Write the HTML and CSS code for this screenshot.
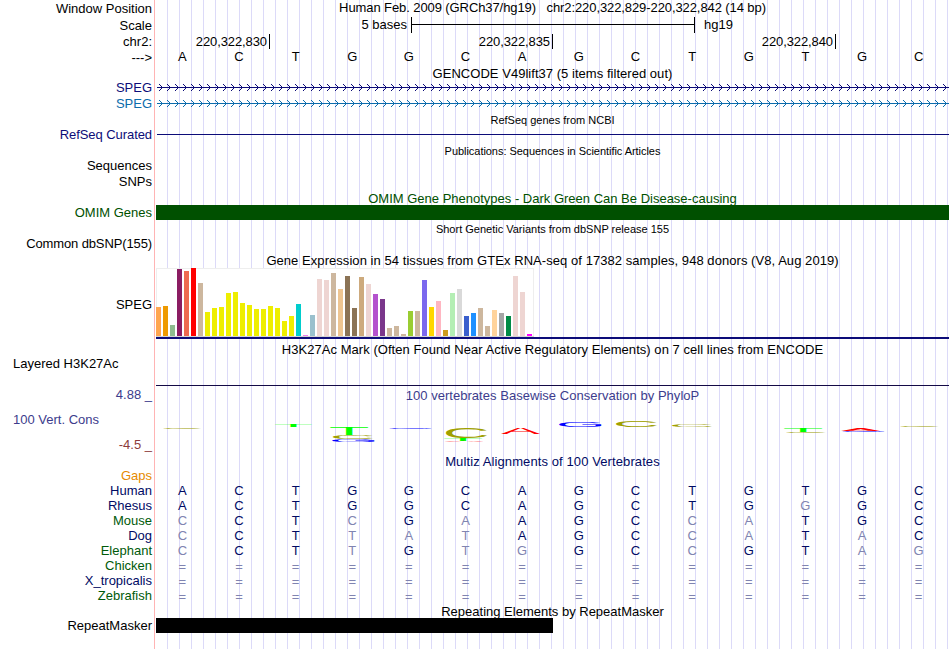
FILE: index.html
```html
<!DOCTYPE html>
<html lang="en">
<head>
<meta charset="utf-8">
<title>Genome Browser</title>
<link rel="stylesheet" href="styles.css">
</head>
<body>
<main class="browser">
  <div class="labels">
    <div class="label first">Window Position</div>
    <div class="label scale-label">Scale</div>
    <div class="label">chr2:</div>
    <div class="label">---&gt;</div>
    <div class="label navy gap-14">SPEG</div>
    <div class="label sky">SPEG</div>
    <div class="label navy refseq-label gap-15">RefSeq Curated</div>
    <div class="label gap-15">Sequences</div>
    <div class="label">SNPs</div>
    <div class="label omim gap-15">OMIM Genes</div>
    <div class="label dbsnp gap-15">Common dbSNP(155)</div>
    <div class="label gap-45">SPEG</div>
    <div class="label left gap-43">Layered H3K27Ac</div>
    <div class="label cons gap-15">4.88 _</div>
    <div class="label cons left gap-9">100 Vert. Cons</div>
    <div class="label neg gap-9">-4.5 _</div>
    <div class="species gaps">Gaps</div>
    <div class="species blue">Human</div>
    <div class="species blue">Rhesus</div>
    <div class="species green">Mouse</div>
    <div class="species blue">Dog</div>
    <div class="species green">Elephant</div>
    <div class="species green">Chicken</div>
    <div class="species blue">X_tropicalis</div>
    <div class="species green">Zebrafish</div>
    <div class="label gap-15">RepeatMasker</div>
  </div>
  <div class="tracks">
    <div class="title pos">Human Feb. 2009 (GRCh37/hg19) &nbsp; chr2:220,322,829-220,322,842 (14 bp)</div>
    <div class="scale"><span class="scale-text">5 bases</span><span class="ruler"></span><span class="assembly">hg19</span></div>
    <div class="ticks"><span>220,322,830</span><span>220,322,835</span><span>220,322,840</span></div>
    <div class="bases" data-seq="ACTGGCAGCTGTGC"></div>
    <div class="title gencode">GENCODE V49lift37 (5 items filtered out)</div>
    <svg class="gene gene-a" width="793" height="7"><defs><pattern id="chev" width="8" height="7" patternUnits="userSpaceOnUse"><path d="M3 0h1v1h1v1h1v1h1v1h-1v1h-1v1h-1v1h-1v-1h1v-1h1v-1h1v-1h-1v-1h-1v-1h-1z" fill="#0c0c78"/></pattern></defs><rect width="791" height="7" fill="url(#chev)"/><rect x="1" y="3" width="792" height="1" fill="#0c0c78"/></svg>
    <svg class="gene gene-b" width="793" height="7"><defs><pattern id="chev2" width="8" height="7" patternUnits="userSpaceOnUse"><path d="M3 0h1v1h1v1h1v1h1v1h-1v1h-1v1h-1v1h-1v-1h1v-1h1v-1h1v-1h-1v-1h-1v-1h-1z" fill="#0c6cac"/></pattern></defs><rect width="791" height="7" fill="url(#chev2)"/><rect x="1" y="3" width="792" height="1" fill="#0c6cac"/></svg>
    <div class="small refseq">RefSeq genes from NCBI</div>
    <div class="refseq-line"></div>
    <div class="small pubs">Publications: Sequences in Scientific Articles</div>
    <div class="title omim omim-title">OMIM Gene Phenotypes - Dark Green Can Be Disease-causing</div>
    <div class="omim-bar"></div>
    <div class="small snp">Short Genetic Variants from dbSNP release 155</div>
    <div class="title gtex-title">Gene Expression in 54 tissues from GTEx RNA-seq of 17382 samples, 948 donors (V8, Aug 2019)</div>
    <svg class="gtex" id="gtex" width="379" height="69"></svg>
    <div class="gtex-line"></div>
    <div class="title h3k">H3K27Ac Mark (Often Found Near Active Regulatory Elements) on 7 cell lines from ENCODE</div>
    <div class="h3k-line"></div>
    <div class="title cons phylo-title">100 vertebrates Basewise Conservation by PhyloP</div>
    <svg class="logo" id="logo" width="793" height="50" viewBox="156 404 793 50"></svg>
    <div class="title blue multiz">Multiz Alignments of 100 Vertebrates</div>
    <div class="align">
      <div class="bases" data-seq="ACTGGCAGCTGTGC"></div>
      <div class="bases" data-seq="ACTGGCAGCTGgGC"></div>
      <div class="bases" data-seq="cCTcGaAGCcaTGC"></div>
      <div class="bases" data-seq="cCTtatAGCcaTaC"></div>
      <div class="bases" data-seq="cCTtGtgGCcGTag"></div>
      <div class="bases gap-row" data-seq="=============="></div>
      <div class="bases gap-row" data-seq="=============="></div>
      <div class="bases gap-row" data-seq="=============="></div>
    </div>
    <div class="title repeat-title">Repeating Elements by RepeatMasker</div>
    <div class="repeat-bar"></div>
  </div>
</main>
<script src="tracks.js"></script>
</body>
</html>
```
FILE: styles.css
```css
* { box-sizing: border-box; }
body {
  margin: 0;
  background: #fff;
  color: #000;
  font: 13px/16px "Liberation Sans", Arial, sans-serif;
}
.browser { display: flex; width: 949px; height: 649px; overflow: hidden; }
.labels {
  width: 155px;
  flex: none;
  padding-right: 2px;
  border-right: 1px solid #ffb4b4;
  text-align: right;
  white-space: nowrap;
}
.label { height: 16px; }
.first { margin-top: 1px; }
.scale-label { margin-top: 1px; }
.left { text-align: left; padding-left: 13px; }
.dbsnp { letter-spacing: -.12px; }
.refseq-label { letter-spacing: -.07px; }
.gap-9 { margin-top: 9px; }
.gap-14 { margin-top: 14px; }
.gap-15 { margin-top: 15px; }
.gap-43 { margin-top: 43px; }
.gap-45 { margin-top: 45px; }
.species { height: 15px; line-height: 15px; }
.gaps { margin-top: 15px; color: #e68a00; }
.navy { color: #0c0c78; }
.sky { color: #0c6cac; }
.omim { color: #005000; }
.cons { color: #3c3c8c; }
.neg { color: #8c3c3c; }
.blue { color: #000a64; }
.green { color: #005a0a; }

.tracks {
  flex: none;
  width: 794px;
  padding-left: 1px;
  display: flex;
  flex-direction: column;
  background: repeating-linear-gradient(to right, #dcdaf8 0 1px, transparent 1px 12px) 12px 0 no-repeat;
}
.tracks > * { flex: none; }
.title, .small { text-align: center; white-space: nowrap; height: 16px; }
.pos { letter-spacing: -.09px; }
.gencode, .phylo-title { letter-spacing: .035px; }
.gtex-title { letter-spacing: .055px; }
.h3k { letter-spacing: .045px; }
.multiz { letter-spacing: .1px; }
.small { font-size: 11px; line-height: 14px; height: 14px; }
.scale { display: flex; height: 16px; margin-top: 1px; }
.scale-text { width: 251px; text-align: right; }
.ruler {
  width: 284px;
  height: 16px;
  margin-left: 4px;
  border: solid #000;
  border-width: 0 1px;
  background: linear-gradient(#000, #000) 0 7px / 100% 1px no-repeat;
}
.assembly { margin-left: 9px; }
.ticks { display: flex; height: 15px; margin-top: 1px; letter-spacing: -.1px; }
.ticks span { width: 283px; padding-right: 2px; border-right: 1px solid #000; text-align: right; }
.ticks span:first-child { width: 114px; }
.bases { display: grid; grid-template-columns: repeat(14, 1fr); margin-left: -2px; width: 793px; height: 16px; text-align: center; }
.gencode { margin-top: 1px; }
.gene { display: block; }
.gene-a { margin-top: 2px; }
.gene-b { margin-top: 9px; }
.refseq { margin-top: 6px; }
.refseq-line { height: 1px; margin: 7px 0 0 1px; background: #0c0c78; }
.pubs { margin-top: 9px; letter-spacing: -.04px; }
.omim-title { margin-top: 33px; height: 14px; }
.omim-bar { height: 15px; background: #005000; }
.snp { margin-top: 2px; }
.gtex-title { margin-top: 17px; height: 15px; }
.gtex { display: block; }
.gtex-line { height: 2px; background: #0c0c78; }
.h3k { margin-top: 3px; }
.h3k-line { height: 1px; margin-top: 27px; background: #140a46; }
.phylo-title { margin-top: 2px; }
.logo { display: block; }
.align { margin-top: 13px; color: #000a64; }
.align .bases { height: 15px; line-height: 15px; }
.align .gap-row { padding-top: 1px; }
.align .diff { color: #8084b1; }
.repeat-title { margin-top: 1px; height: 14px; }
.repeat-bar { width: 397px; height: 15px; background: #000; }
```
FILE: tracks.js
```js
// One cell per base; lower case and "=" mark differences from the human row.
document.querySelectorAll('.bases').forEach(row => {
  for (const ch of row.dataset.seq) {
    const cell = document.createElement('span');
    cell.textContent = ch.toUpperCase();
    if (ch === '=' || ch !== ch.toUpperCase()) cell.className = 'diff';
    row.appendChild(cell);
  }
});

const NS = 'http://www.w3.org/2000/svg';
function add(parent, tag, attrs) {
  const el = document.createElementNS(NS, tag);
  for (const k in attrs) el.setAttribute(k, attrs[k]);
  parent.appendChild(el);
  return el;
}

// Median expression per tissue: bar height and tissue colour.
const tan = '#cdb79e', yel = '#eeee00', rose = '#eed5d2';
const bars = [
  [29, '#ffa54f'], [30, '#ee9a00'], [11, '#8fbc8f'], [67, '#8b1c62'], [65, '#ee6a50'], [68, '#ff0000'], [53, tan],
  [24, yel], [28, yel], [29, yel], [43, yel], [44, yel], [33, yel], [31, yel], [27, yel], [27, yel], [30, yel], [28, yel], [15, yel], [20, yel],
  [32, '#00cdcd'], [1, '#ee82ee'], [21, '#9ac0cd'], [57, rose], [56, rose], [63, tan], [47, '#eec591'], [60, '#8b7355'], [28, '#8b7355'],
  [59, '#cdaa7d'], [52, rose], [42, '#b452cd'], [37, '#7a378b'], [8, tan], [10, tan], [2, tan], [25, '#9acd32'], [25, tan],
  [56, '#7b68ee'], [29, '#ffd700'], [35, '#ffb6c1'], [6, '#cd9b1d'], [43, '#b4eeb4'], [47, '#d9d9d9'], [20, '#3a5fcd'], [23, '#1e90ff'],
  [28, tan], [10, tan], [26, '#ffd39b'], [23, '#a6a6a6'], [20, '#008b45'], [60, rose], [44, rose], [2, '#ff00ff']
];
const gtex = document.getElementById('gtex');
add(gtex, 'rect', { x: 0.5, y: 0.5, width: 377, height: 68, fill: '#fff', stroke: '#eeeeee' });
add(gtex, 'rect', { x: 0, y: 68, width: 378, height: 1, fill: '#d3d3d3' });
bars.forEach(([h, fill], i) => add(gtex, 'rect', { x: i * 7, y: 68 - h, width: 5, height: h, fill }));

// Conservation logo: each letter is stretched to fill its box (x, y, width, height).
const ink = { A: [3, 1362, 0, 1409], C: [102, 1398, -20, 1430], G: [103, 1466, -20, 1430], T: [42, 1208, 0, 1409] };
const colour = { A: '#ff0000', C: '#a0a000', G: '#0000ff', T: '#00ff00' };
const letters = [
  ['C', 163, 428, 38, 1], ['T', 275, 425, 37, 2], ['T', 330, 428, 38, 7], ['C', 333, 435, 40, 4], ['G', 332, 439, 43, 3],
  ['G', 389, 428, 43, 1], ['C', 446, 428, 41, 10], ['T', 444, 438, 38, 3], ['A', 444, 441, 40, 1], ['A', 501, 428, 39, 6],
  ['G', 559, 422, 43, 5], ['C', 616, 421, 41, 6], ['C', 672, 424, 40, 3], ['T', 784, 428, 38, 4], ['C', 786, 432, 40, 1],
  ['A', 841, 428, 39, 3], ['G', 842, 431, 43, 1], ['C', 900, 426, 39, 1]
];
const logo = document.getElementById('logo');
for (const [ch, x, y, w, h] of letters) {
  const [x0, x1, y0, y1] = ink[ch].map(v => v / 20.48);
  const sx = w / (x1 - x0), sy = h / (y1 - y0);
  add(logo, 'text', {
    transform: `translate(${x - x0 * sx} ${y + y1 * sy}) scale(${sx} ${sy})`,
    'font-size': 100, fill: colour[ch]
  }).textContent = ch;
}
```
